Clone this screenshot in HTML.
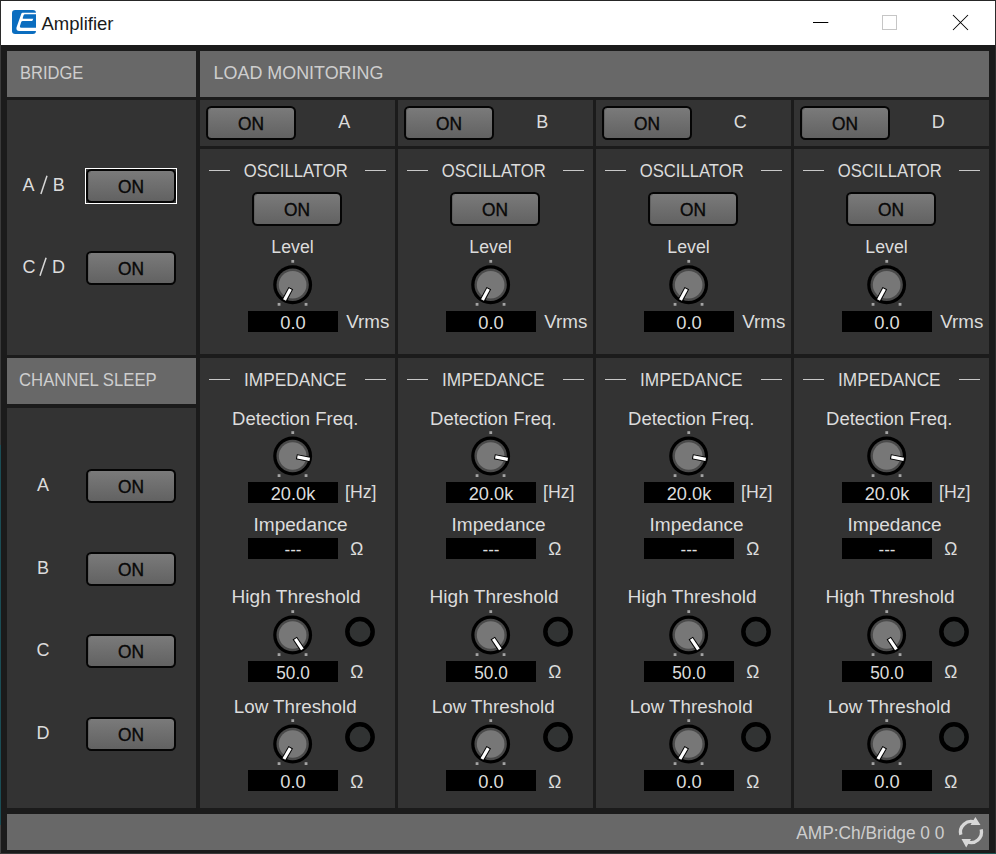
<!DOCTYPE html>
<html><head><meta charset="utf-8"><title>Amplifier</title>
<style>html,body{margin:0;padding:0;background:#1b1b1b;overflow:hidden;width:996px;height:854px}</style>
</head><body>
<svg width="996" height="854" viewBox="0 0 996 854" font-family='"Liberation Sans", sans-serif' style="display:block">
<defs><linearGradient id="btn" x1="0" y1="0" x2="0" y2="1"><stop offset="0" stop-color="#7b7b7b"/><stop offset="1" stop-color="#616161"/></linearGradient></defs>
<rect x="0" y="0" width="996" height="854" fill="#1b1b1b"/>
<rect x="0" y="0" width="996" height="45" fill="#ffffff"/>
<rect x="0" y="0" width="996" height="1" fill="#262626"/>
<rect x="0" y="1" width="1" height="44" fill="#2b2b2b"/>
<rect x="0" y="45" width="1" height="400" fill="#3a3a3a"/>
<rect x="0" y="445" width="1" height="380" fill="#1b4d55"/>
<rect x="0" y="825" width="1" height="29" fill="#444444"/>
<rect x="995" y="1" width="1" height="853" fill="#2c2c2c"/>
<rect x="0" y="853" width="996" height="1" fill="#3a3a3a"/>
<rect x="930" y="853" width="66" height="1" fill="#1d5550"/>
<g transform="translate(12,10)"><rect x="0" y="0" width="24" height="24" rx="3.2" fill="#0b6dbf"/><path d="M24 2.7 L10.6 2.7 Q9.7 2.7 9.4 3.6 L4.5 17.6 Q3.9 21 7.2 21 L24 21 L24 17.7 L9.6 17.7 Q7.6 17.7 7.9 16.2 L9.1 12.3 Q9.5 11.1 10.8 11.1 L19.6 11.1 Q20.2 11.1 20.5 10.6 L21.3 8.8 L11.3 8.8 Q10.5 8.8 10.7 8.0 L11.6 5.2 Q11.9 4.2 12.9 4.2 L24 4.2 Z" fill="#fff"/></g>
<text x="41.5" y="29.6" font-size="18.5" fill="#1a1a1a" text-anchor="start" textLength="72" lengthAdjust="spacingAndGlyphs">Amplifier</text>
<line x1="813" y1="22.5" x2="828.3" y2="22.5" stroke="#000" stroke-width="1"/>
<rect x="882.5" y="15.5" width="14" height="14" fill="none" stroke="#c6c6c6" stroke-width="1"/>
<path d="M953 15 L968 30 M968 15 L953 30" stroke="#000" stroke-width="1.05"/>
<rect x="7" y="51" width="189" height="46" fill="#686868"/>
<text x="20" y="78.9" font-size="18" fill="#cecece" text-anchor="start" textLength="63.3" lengthAdjust="spacingAndGlyphs">BRIDGE</text>
<rect x="200" y="51" width="789" height="46" fill="#686868"/>
<text x="213.6" y="78.9" font-size="18" fill="#cecece" text-anchor="start" textLength="169.8" lengthAdjust="spacingAndGlyphs">LOAD MONITORING</text>
<rect x="7" y="100" width="189" height="255" fill="#333333"/>
<text x="22.6" y="190.8" font-size="18" fill="#dcdcdc" text-anchor="start">A</text>
<text x="52.8" y="190.8" font-size="18" fill="#dcdcdc" text-anchor="start">B</text>
<line x1="40.9" y1="194.1" x2="47.0" y2="175.8" stroke="#d8d8d8" stroke-width="1.5"/>
<text x="22.6" y="273.1" font-size="18" fill="#dcdcdc" text-anchor="start">C</text>
<text x="51.9" y="273.1" font-size="18" fill="#dcdcdc" text-anchor="start">D</text>
<line x1="40.0" y1="275.8" x2="46.1" y2="257.8" stroke="#d8d8d8" stroke-width="1.5"/>
<rect x="85.5" y="168.5" width="91" height="35" fill="none" stroke="#ffffff" stroke-width="1"/>
<rect x="87" y="170" width="88" height="32" rx="4.5" fill="url(#btn)" stroke="#050505" stroke-width="2"/>
<path d="M88.5 199 L88.5 174 Q88.5 171.5 91 171.5" fill="none" stroke="#5c5c5c" stroke-width="1" opacity="0.8"/>
<text x="131.0" y="192.5" font-size="17.5" fill="#080808" text-anchor="middle" textLength="26" lengthAdjust="spacingAndGlyphs" stroke="#080808" stroke-width="0.35">ON</text>
<rect x="87" y="252" width="88" height="32" rx="4.5" fill="url(#btn)" stroke="#050505" stroke-width="2"/>
<path d="M88.5 281 L88.5 256 Q88.5 253.5 91 253.5" fill="none" stroke="#5c5c5c" stroke-width="1" opacity="0.8"/>
<text x="131.0" y="274.5" font-size="17.5" fill="#080808" text-anchor="middle" textLength="26" lengthAdjust="spacingAndGlyphs" stroke="#080808" stroke-width="0.35">ON</text>
<rect x="7" y="358" width="189" height="46" fill="#686868"/>
<text x="19" y="386" font-size="18" fill="#cecece" text-anchor="start" textLength="137.7" lengthAdjust="spacingAndGlyphs">CHANNEL SLEEP</text>
<rect x="7" y="408" width="189" height="400" fill="#333333"/>
<text x="43" y="491" font-size="18" fill="#dcdcdc" text-anchor="middle">A</text>
<rect x="87" y="470" width="88" height="32" rx="4.5" fill="url(#btn)" stroke="#050505" stroke-width="2"/>
<path d="M88.5 499 L88.5 474 Q88.5 471.5 91 471.5" fill="none" stroke="#5c5c5c" stroke-width="1" opacity="0.8"/>
<text x="131.0" y="492.5" font-size="17.5" fill="#080808" text-anchor="middle" textLength="26" lengthAdjust="spacingAndGlyphs" stroke="#080808" stroke-width="0.35">ON</text>
<text x="43" y="574" font-size="18" fill="#dcdcdc" text-anchor="middle">B</text>
<rect x="87" y="553" width="88" height="32" rx="4.5" fill="url(#btn)" stroke="#050505" stroke-width="2"/>
<path d="M88.5 582 L88.5 557 Q88.5 554.5 91 554.5" fill="none" stroke="#5c5c5c" stroke-width="1" opacity="0.8"/>
<text x="131.0" y="575.5" font-size="17.5" fill="#080808" text-anchor="middle" textLength="26" lengthAdjust="spacingAndGlyphs" stroke="#080808" stroke-width="0.35">ON</text>
<text x="43" y="656" font-size="18" fill="#dcdcdc" text-anchor="middle">C</text>
<rect x="87" y="635" width="88" height="32" rx="4.5" fill="url(#btn)" stroke="#050505" stroke-width="2"/>
<path d="M88.5 664 L88.5 639 Q88.5 636.5 91 636.5" fill="none" stroke="#5c5c5c" stroke-width="1" opacity="0.8"/>
<text x="131.0" y="657.5" font-size="17.5" fill="#080808" text-anchor="middle" textLength="26" lengthAdjust="spacingAndGlyphs" stroke="#080808" stroke-width="0.35">ON</text>
<text x="43" y="739" font-size="18" fill="#dcdcdc" text-anchor="middle">D</text>
<rect x="87" y="718" width="88" height="32" rx="4.5" fill="url(#btn)" stroke="#050505" stroke-width="2"/>
<path d="M88.5 747 L88.5 722 Q88.5 719.5 91 719.5" fill="none" stroke="#5c5c5c" stroke-width="1" opacity="0.8"/>
<text x="131.0" y="740.5" font-size="17.5" fill="#080808" text-anchor="middle" textLength="26" lengthAdjust="spacingAndGlyphs" stroke="#080808" stroke-width="0.35">ON</text>
<rect x="200" y="100" width="195" height="46" fill="#333333"/>
<rect x="200" y="149" width="195" height="205" fill="#333333"/>
<rect x="200" y="358" width="195" height="450" fill="#333333"/>
<rect x="207" y="107" width="88" height="32" rx="4.5" fill="url(#btn)" stroke="#050505" stroke-width="2"/>
<path d="M208.5 136 L208.5 111 Q208.5 108.5 211 108.5" fill="none" stroke="#5c5c5c" stroke-width="1" opacity="0.8"/>
<text x="251.0" y="129.5" font-size="17.5" fill="#080808" text-anchor="middle" textLength="26" lengthAdjust="spacingAndGlyphs" stroke="#080808" stroke-width="0.35">ON</text>
<text x="344.2" y="127.8" font-size="18" fill="#dcdcdc" text-anchor="middle">A</text>
<line x1="209" y1="170.5" x2="230" y2="170.5" stroke="#c8c8c8"/>
<line x1="365" y1="170.5" x2="386" y2="170.5" stroke="#c8c8c8"/>
<text x="295.7" y="176.8" font-size="18" fill="#dcdcdc" text-anchor="middle" textLength="104" lengthAdjust="spacingAndGlyphs">OSCILLATOR</text>
<rect x="253" y="193" width="88" height="32" rx="4.5" fill="url(#btn)" stroke="#050505" stroke-width="2"/>
<path d="M254.5 222 L254.5 197 Q254.5 194.5 257 194.5" fill="none" stroke="#5c5c5c" stroke-width="1" opacity="0.8"/>
<text x="297.0" y="215.5" font-size="17.5" fill="#080808" text-anchor="middle" textLength="26" lengthAdjust="spacingAndGlyphs" stroke="#080808" stroke-width="0.35">ON</text>
<text x="292.5" y="253" font-size="18" fill="#dcdcdc" text-anchor="middle" textLength="42.4" lengthAdjust="spacingAndGlyphs">Level</text>
<rect x="291.34999999999997" y="259.95" width="2.8" height="2.8" fill="#a4a4a4"/>
<rect x="277.65" y="302.95" width="2.8" height="2.8" fill="#a4a4a4"/>
<rect x="304.65" y="302.95" width="2.8" height="2.8" fill="#a4a4a4"/>
<circle cx="292.65" cy="284.75" r="19.45" fill="#000"/>
<circle cx="292.65" cy="284.75" r="16.2" fill="#4a4a4a"/>
<circle cx="292.65" cy="284.75" r="13.8" fill="#777777"/>
<g transform="translate(292.65,284.75) rotate(208)"><rect x="-2.6" y="-18.4" width="5.2" height="14.6" fill="#000"/><rect x="-1.6" y="-17.4" width="3.2" height="12.6" fill="#fff"/></g>
<rect x="248" y="311" width="90" height="21" fill="#000"/>
<text x="293.0" y="328.6" font-size="17.5" fill="#dcdcdc" text-anchor="middle" textLength="25.5" lengthAdjust="spacingAndGlyphs">0.0</text>
<text x="346.3" y="327.8" font-size="18" fill="#dcdcdc" text-anchor="start" textLength="43.1" lengthAdjust="spacingAndGlyphs">Vrms</text>
<line x1="209" y1="379.5" x2="230" y2="379.5" stroke="#c8c8c8"/>
<line x1="365" y1="379.5" x2="386" y2="379.5" stroke="#c8c8c8"/>
<text x="295.3" y="385.6" font-size="18" fill="#dcdcdc" text-anchor="middle" textLength="102.6" lengthAdjust="spacingAndGlyphs">IMPEDANCE</text>
<text x="295.2" y="424.7" font-size="18" fill="#dcdcdc" text-anchor="middle" textLength="126.3" lengthAdjust="spacingAndGlyphs">Detection Freq.</text>
<rect x="291.34999999999997" y="431.2" width="2.8" height="2.8" fill="#a4a4a4"/>
<rect x="277.65" y="474.2" width="2.8" height="2.8" fill="#a4a4a4"/>
<rect x="304.65" y="474.2" width="2.8" height="2.8" fill="#a4a4a4"/>
<circle cx="292.65" cy="456" r="19.45" fill="#000"/>
<circle cx="292.65" cy="456" r="16.2" fill="#4a4a4a"/>
<circle cx="292.65" cy="456" r="13.8" fill="#777777"/>
<g transform="translate(292.65,456) rotate(101)"><rect x="-2.6" y="-18.4" width="5.2" height="14.6" fill="#000"/><rect x="-1.6" y="-17.4" width="3.2" height="12.6" fill="#fff"/></g>
<rect x="248" y="482" width="90" height="21" fill="#000"/>
<text x="293.0" y="499.6" font-size="17.5" fill="#dcdcdc" text-anchor="middle" textLength="44.5" lengthAdjust="spacingAndGlyphs">20.0k</text>
<text x="345" y="497.7" font-size="18" fill="#dcdcdc" text-anchor="start" textLength="31.5" lengthAdjust="spacingAndGlyphs">[Hz]</text>
<text x="300.6" y="530.9" font-size="18" fill="#dcdcdc" text-anchor="middle" textLength="94.2" lengthAdjust="spacingAndGlyphs">Impedance</text>
<rect x="248" y="538" width="90" height="21" fill="#000"/>
<text x="293.0" y="555.6" font-size="17.5" fill="#dcdcdc" text-anchor="middle" textLength="17" lengthAdjust="spacingAndGlyphs">---</text>
<text x="350.2" y="554.9" font-size="18" fill="#dcdcdc" text-anchor="start" textLength="13.1" lengthAdjust="spacingAndGlyphs">Ω</text>
<text x="296.1" y="602.6" font-size="18" fill="#dcdcdc" text-anchor="middle" textLength="129.1" lengthAdjust="spacingAndGlyphs">High Threshold</text>
<rect x="291.34999999999997" y="610.2" width="2.8" height="2.8" fill="#a4a4a4"/>
<rect x="277.65" y="653.2" width="2.8" height="2.8" fill="#a4a4a4"/>
<rect x="304.65" y="653.2" width="2.8" height="2.8" fill="#a4a4a4"/>
<circle cx="292.65" cy="635" r="19.45" fill="#000"/>
<circle cx="292.65" cy="635" r="16.2" fill="#4a4a4a"/>
<circle cx="292.65" cy="635" r="13.8" fill="#777777"/>
<g transform="translate(292.65,635) rotate(146)"><rect x="-2.6" y="-18.4" width="5.2" height="14.6" fill="#000"/><rect x="-1.6" y="-17.4" width="3.2" height="12.6" fill="#fff"/></g>
<circle cx="360" cy="631.75" r="12.65" fill="#313333" stroke="#000" stroke-width="4.5"/>
<rect x="248" y="661" width="90" height="21" fill="#000"/>
<text x="293.0" y="678.6" font-size="17.5" fill="#dcdcdc" text-anchor="middle" textLength="33.5" lengthAdjust="spacingAndGlyphs">50.0</text>
<text x="350.2" y="678.2" font-size="18" fill="#dcdcdc" text-anchor="start" textLength="13.1" lengthAdjust="spacingAndGlyphs">Ω</text>
<text x="295.2" y="713" font-size="18" fill="#dcdcdc" text-anchor="middle" textLength="122.9" lengthAdjust="spacingAndGlyphs">Low Threshold</text>
<rect x="291.34999999999997" y="719.2" width="2.8" height="2.8" fill="#a4a4a4"/>
<rect x="277.65" y="762.2" width="2.8" height="2.8" fill="#a4a4a4"/>
<rect x="304.65" y="762.2" width="2.8" height="2.8" fill="#a4a4a4"/>
<circle cx="292.65" cy="744" r="19.45" fill="#000"/>
<circle cx="292.65" cy="744" r="16.2" fill="#4a4a4a"/>
<circle cx="292.65" cy="744" r="13.8" fill="#777777"/>
<g transform="translate(292.65,744) rotate(210)"><rect x="-2.6" y="-18.4" width="5.2" height="14.6" fill="#000"/><rect x="-1.6" y="-17.4" width="3.2" height="12.6" fill="#fff"/></g>
<circle cx="360" cy="737" r="12.65" fill="#313333" stroke="#000" stroke-width="4.5"/>
<rect x="248" y="770" width="90" height="21" fill="#000"/>
<text x="293.0" y="787.6" font-size="17.5" fill="#dcdcdc" text-anchor="middle" textLength="25.5" lengthAdjust="spacingAndGlyphs">0.0</text>
<text x="350.2" y="788" font-size="18" fill="#dcdcdc" text-anchor="start" textLength="13.1" lengthAdjust="spacingAndGlyphs">Ω</text>
<rect x="398" y="100" width="195" height="46" fill="#333333"/>
<rect x="398" y="149" width="195" height="205" fill="#333333"/>
<rect x="398" y="358" width="195" height="450" fill="#333333"/>
<rect x="405" y="107" width="88" height="32" rx="4.5" fill="url(#btn)" stroke="#050505" stroke-width="2"/>
<path d="M406.5 136 L406.5 111 Q406.5 108.5 409 108.5" fill="none" stroke="#5c5c5c" stroke-width="1" opacity="0.8"/>
<text x="449.0" y="129.5" font-size="17.5" fill="#080808" text-anchor="middle" textLength="26" lengthAdjust="spacingAndGlyphs" stroke="#080808" stroke-width="0.35">ON</text>
<text x="542.2" y="127.8" font-size="18" fill="#dcdcdc" text-anchor="middle">B</text>
<line x1="407" y1="170.5" x2="428" y2="170.5" stroke="#c8c8c8"/>
<line x1="563" y1="170.5" x2="584" y2="170.5" stroke="#c8c8c8"/>
<text x="493.7" y="176.8" font-size="18" fill="#dcdcdc" text-anchor="middle" textLength="104" lengthAdjust="spacingAndGlyphs">OSCILLATOR</text>
<rect x="451" y="193" width="88" height="32" rx="4.5" fill="url(#btn)" stroke="#050505" stroke-width="2"/>
<path d="M452.5 222 L452.5 197 Q452.5 194.5 455 194.5" fill="none" stroke="#5c5c5c" stroke-width="1" opacity="0.8"/>
<text x="495.0" y="215.5" font-size="17.5" fill="#080808" text-anchor="middle" textLength="26" lengthAdjust="spacingAndGlyphs" stroke="#080808" stroke-width="0.35">ON</text>
<text x="490.5" y="253" font-size="18" fill="#dcdcdc" text-anchor="middle" textLength="42.4" lengthAdjust="spacingAndGlyphs">Level</text>
<rect x="489.34999999999997" y="259.95" width="2.8" height="2.8" fill="#a4a4a4"/>
<rect x="475.65" y="302.95" width="2.8" height="2.8" fill="#a4a4a4"/>
<rect x="502.65" y="302.95" width="2.8" height="2.8" fill="#a4a4a4"/>
<circle cx="490.65" cy="284.75" r="19.45" fill="#000"/>
<circle cx="490.65" cy="284.75" r="16.2" fill="#4a4a4a"/>
<circle cx="490.65" cy="284.75" r="13.8" fill="#777777"/>
<g transform="translate(490.65,284.75) rotate(208)"><rect x="-2.6" y="-18.4" width="5.2" height="14.6" fill="#000"/><rect x="-1.6" y="-17.4" width="3.2" height="12.6" fill="#fff"/></g>
<rect x="446" y="311" width="90" height="21" fill="#000"/>
<text x="491.0" y="328.6" font-size="17.5" fill="#dcdcdc" text-anchor="middle" textLength="25.5" lengthAdjust="spacingAndGlyphs">0.0</text>
<text x="544.3" y="327.8" font-size="18" fill="#dcdcdc" text-anchor="start" textLength="43.1" lengthAdjust="spacingAndGlyphs">Vrms</text>
<line x1="407" y1="379.5" x2="428" y2="379.5" stroke="#c8c8c8"/>
<line x1="563" y1="379.5" x2="584" y2="379.5" stroke="#c8c8c8"/>
<text x="493.3" y="385.6" font-size="18" fill="#dcdcdc" text-anchor="middle" textLength="102.6" lengthAdjust="spacingAndGlyphs">IMPEDANCE</text>
<text x="493.2" y="424.7" font-size="18" fill="#dcdcdc" text-anchor="middle" textLength="126.3" lengthAdjust="spacingAndGlyphs">Detection Freq.</text>
<rect x="489.34999999999997" y="431.2" width="2.8" height="2.8" fill="#a4a4a4"/>
<rect x="475.65" y="474.2" width="2.8" height="2.8" fill="#a4a4a4"/>
<rect x="502.65" y="474.2" width="2.8" height="2.8" fill="#a4a4a4"/>
<circle cx="490.65" cy="456" r="19.45" fill="#000"/>
<circle cx="490.65" cy="456" r="16.2" fill="#4a4a4a"/>
<circle cx="490.65" cy="456" r="13.8" fill="#777777"/>
<g transform="translate(490.65,456) rotate(101)"><rect x="-2.6" y="-18.4" width="5.2" height="14.6" fill="#000"/><rect x="-1.6" y="-17.4" width="3.2" height="12.6" fill="#fff"/></g>
<rect x="446" y="482" width="90" height="21" fill="#000"/>
<text x="491.0" y="499.6" font-size="17.5" fill="#dcdcdc" text-anchor="middle" textLength="44.5" lengthAdjust="spacingAndGlyphs">20.0k</text>
<text x="543" y="497.7" font-size="18" fill="#dcdcdc" text-anchor="start" textLength="31.5" lengthAdjust="spacingAndGlyphs">[Hz]</text>
<text x="498.6" y="530.9" font-size="18" fill="#dcdcdc" text-anchor="middle" textLength="94.2" lengthAdjust="spacingAndGlyphs">Impedance</text>
<rect x="446" y="538" width="90" height="21" fill="#000"/>
<text x="491.0" y="555.6" font-size="17.5" fill="#dcdcdc" text-anchor="middle" textLength="17" lengthAdjust="spacingAndGlyphs">---</text>
<text x="548.2" y="554.9" font-size="18" fill="#dcdcdc" text-anchor="start" textLength="13.1" lengthAdjust="spacingAndGlyphs">Ω</text>
<text x="494.1" y="602.6" font-size="18" fill="#dcdcdc" text-anchor="middle" textLength="129.1" lengthAdjust="spacingAndGlyphs">High Threshold</text>
<rect x="489.34999999999997" y="610.2" width="2.8" height="2.8" fill="#a4a4a4"/>
<rect x="475.65" y="653.2" width="2.8" height="2.8" fill="#a4a4a4"/>
<rect x="502.65" y="653.2" width="2.8" height="2.8" fill="#a4a4a4"/>
<circle cx="490.65" cy="635" r="19.45" fill="#000"/>
<circle cx="490.65" cy="635" r="16.2" fill="#4a4a4a"/>
<circle cx="490.65" cy="635" r="13.8" fill="#777777"/>
<g transform="translate(490.65,635) rotate(146)"><rect x="-2.6" y="-18.4" width="5.2" height="14.6" fill="#000"/><rect x="-1.6" y="-17.4" width="3.2" height="12.6" fill="#fff"/></g>
<circle cx="558" cy="631.75" r="12.65" fill="#313333" stroke="#000" stroke-width="4.5"/>
<rect x="446" y="661" width="90" height="21" fill="#000"/>
<text x="491.0" y="678.6" font-size="17.5" fill="#dcdcdc" text-anchor="middle" textLength="33.5" lengthAdjust="spacingAndGlyphs">50.0</text>
<text x="548.2" y="678.2" font-size="18" fill="#dcdcdc" text-anchor="start" textLength="13.1" lengthAdjust="spacingAndGlyphs">Ω</text>
<text x="493.2" y="713" font-size="18" fill="#dcdcdc" text-anchor="middle" textLength="122.9" lengthAdjust="spacingAndGlyphs">Low Threshold</text>
<rect x="489.34999999999997" y="719.2" width="2.8" height="2.8" fill="#a4a4a4"/>
<rect x="475.65" y="762.2" width="2.8" height="2.8" fill="#a4a4a4"/>
<rect x="502.65" y="762.2" width="2.8" height="2.8" fill="#a4a4a4"/>
<circle cx="490.65" cy="744" r="19.45" fill="#000"/>
<circle cx="490.65" cy="744" r="16.2" fill="#4a4a4a"/>
<circle cx="490.65" cy="744" r="13.8" fill="#777777"/>
<g transform="translate(490.65,744) rotate(210)"><rect x="-2.6" y="-18.4" width="5.2" height="14.6" fill="#000"/><rect x="-1.6" y="-17.4" width="3.2" height="12.6" fill="#fff"/></g>
<circle cx="558" cy="737" r="12.65" fill="#313333" stroke="#000" stroke-width="4.5"/>
<rect x="446" y="770" width="90" height="21" fill="#000"/>
<text x="491.0" y="787.6" font-size="17.5" fill="#dcdcdc" text-anchor="middle" textLength="25.5" lengthAdjust="spacingAndGlyphs">0.0</text>
<text x="548.2" y="788" font-size="18" fill="#dcdcdc" text-anchor="start" textLength="13.1" lengthAdjust="spacingAndGlyphs">Ω</text>
<rect x="596" y="100" width="195" height="46" fill="#333333"/>
<rect x="596" y="149" width="195" height="205" fill="#333333"/>
<rect x="596" y="358" width="195" height="450" fill="#333333"/>
<rect x="603" y="107" width="88" height="32" rx="4.5" fill="url(#btn)" stroke="#050505" stroke-width="2"/>
<path d="M604.5 136 L604.5 111 Q604.5 108.5 607 108.5" fill="none" stroke="#5c5c5c" stroke-width="1" opacity="0.8"/>
<text x="647.0" y="129.5" font-size="17.5" fill="#080808" text-anchor="middle" textLength="26" lengthAdjust="spacingAndGlyphs" stroke="#080808" stroke-width="0.35">ON</text>
<text x="740.2" y="127.8" font-size="18" fill="#dcdcdc" text-anchor="middle">C</text>
<line x1="605" y1="170.5" x2="626" y2="170.5" stroke="#c8c8c8"/>
<line x1="761" y1="170.5" x2="782" y2="170.5" stroke="#c8c8c8"/>
<text x="691.7" y="176.8" font-size="18" fill="#dcdcdc" text-anchor="middle" textLength="104" lengthAdjust="spacingAndGlyphs">OSCILLATOR</text>
<rect x="649" y="193" width="88" height="32" rx="4.5" fill="url(#btn)" stroke="#050505" stroke-width="2"/>
<path d="M650.5 222 L650.5 197 Q650.5 194.5 653 194.5" fill="none" stroke="#5c5c5c" stroke-width="1" opacity="0.8"/>
<text x="693.0" y="215.5" font-size="17.5" fill="#080808" text-anchor="middle" textLength="26" lengthAdjust="spacingAndGlyphs" stroke="#080808" stroke-width="0.35">ON</text>
<text x="688.5" y="253" font-size="18" fill="#dcdcdc" text-anchor="middle" textLength="42.4" lengthAdjust="spacingAndGlyphs">Level</text>
<rect x="687.35" y="259.95" width="2.8" height="2.8" fill="#a4a4a4"/>
<rect x="673.65" y="302.95" width="2.8" height="2.8" fill="#a4a4a4"/>
<rect x="700.65" y="302.95" width="2.8" height="2.8" fill="#a4a4a4"/>
<circle cx="688.65" cy="284.75" r="19.45" fill="#000"/>
<circle cx="688.65" cy="284.75" r="16.2" fill="#4a4a4a"/>
<circle cx="688.65" cy="284.75" r="13.8" fill="#777777"/>
<g transform="translate(688.65,284.75) rotate(208)"><rect x="-2.6" y="-18.4" width="5.2" height="14.6" fill="#000"/><rect x="-1.6" y="-17.4" width="3.2" height="12.6" fill="#fff"/></g>
<rect x="644" y="311" width="90" height="21" fill="#000"/>
<text x="689.0" y="328.6" font-size="17.5" fill="#dcdcdc" text-anchor="middle" textLength="25.5" lengthAdjust="spacingAndGlyphs">0.0</text>
<text x="742.3" y="327.8" font-size="18" fill="#dcdcdc" text-anchor="start" textLength="43.1" lengthAdjust="spacingAndGlyphs">Vrms</text>
<line x1="605" y1="379.5" x2="626" y2="379.5" stroke="#c8c8c8"/>
<line x1="761" y1="379.5" x2="782" y2="379.5" stroke="#c8c8c8"/>
<text x="691.3" y="385.6" font-size="18" fill="#dcdcdc" text-anchor="middle" textLength="102.6" lengthAdjust="spacingAndGlyphs">IMPEDANCE</text>
<text x="691.2" y="424.7" font-size="18" fill="#dcdcdc" text-anchor="middle" textLength="126.3" lengthAdjust="spacingAndGlyphs">Detection Freq.</text>
<rect x="687.35" y="431.2" width="2.8" height="2.8" fill="#a4a4a4"/>
<rect x="673.65" y="474.2" width="2.8" height="2.8" fill="#a4a4a4"/>
<rect x="700.65" y="474.2" width="2.8" height="2.8" fill="#a4a4a4"/>
<circle cx="688.65" cy="456" r="19.45" fill="#000"/>
<circle cx="688.65" cy="456" r="16.2" fill="#4a4a4a"/>
<circle cx="688.65" cy="456" r="13.8" fill="#777777"/>
<g transform="translate(688.65,456) rotate(101)"><rect x="-2.6" y="-18.4" width="5.2" height="14.6" fill="#000"/><rect x="-1.6" y="-17.4" width="3.2" height="12.6" fill="#fff"/></g>
<rect x="644" y="482" width="90" height="21" fill="#000"/>
<text x="689.0" y="499.6" font-size="17.5" fill="#dcdcdc" text-anchor="middle" textLength="44.5" lengthAdjust="spacingAndGlyphs">20.0k</text>
<text x="741" y="497.7" font-size="18" fill="#dcdcdc" text-anchor="start" textLength="31.5" lengthAdjust="spacingAndGlyphs">[Hz]</text>
<text x="696.6" y="530.9" font-size="18" fill="#dcdcdc" text-anchor="middle" textLength="94.2" lengthAdjust="spacingAndGlyphs">Impedance</text>
<rect x="644" y="538" width="90" height="21" fill="#000"/>
<text x="689.0" y="555.6" font-size="17.5" fill="#dcdcdc" text-anchor="middle" textLength="17" lengthAdjust="spacingAndGlyphs">---</text>
<text x="746.2" y="554.9" font-size="18" fill="#dcdcdc" text-anchor="start" textLength="13.1" lengthAdjust="spacingAndGlyphs">Ω</text>
<text x="692.1" y="602.6" font-size="18" fill="#dcdcdc" text-anchor="middle" textLength="129.1" lengthAdjust="spacingAndGlyphs">High Threshold</text>
<rect x="687.35" y="610.2" width="2.8" height="2.8" fill="#a4a4a4"/>
<rect x="673.65" y="653.2" width="2.8" height="2.8" fill="#a4a4a4"/>
<rect x="700.65" y="653.2" width="2.8" height="2.8" fill="#a4a4a4"/>
<circle cx="688.65" cy="635" r="19.45" fill="#000"/>
<circle cx="688.65" cy="635" r="16.2" fill="#4a4a4a"/>
<circle cx="688.65" cy="635" r="13.8" fill="#777777"/>
<g transform="translate(688.65,635) rotate(146)"><rect x="-2.6" y="-18.4" width="5.2" height="14.6" fill="#000"/><rect x="-1.6" y="-17.4" width="3.2" height="12.6" fill="#fff"/></g>
<circle cx="756" cy="631.75" r="12.65" fill="#313333" stroke="#000" stroke-width="4.5"/>
<rect x="644" y="661" width="90" height="21" fill="#000"/>
<text x="689.0" y="678.6" font-size="17.5" fill="#dcdcdc" text-anchor="middle" textLength="33.5" lengthAdjust="spacingAndGlyphs">50.0</text>
<text x="746.2" y="678.2" font-size="18" fill="#dcdcdc" text-anchor="start" textLength="13.1" lengthAdjust="spacingAndGlyphs">Ω</text>
<text x="691.2" y="713" font-size="18" fill="#dcdcdc" text-anchor="middle" textLength="122.9" lengthAdjust="spacingAndGlyphs">Low Threshold</text>
<rect x="687.35" y="719.2" width="2.8" height="2.8" fill="#a4a4a4"/>
<rect x="673.65" y="762.2" width="2.8" height="2.8" fill="#a4a4a4"/>
<rect x="700.65" y="762.2" width="2.8" height="2.8" fill="#a4a4a4"/>
<circle cx="688.65" cy="744" r="19.45" fill="#000"/>
<circle cx="688.65" cy="744" r="16.2" fill="#4a4a4a"/>
<circle cx="688.65" cy="744" r="13.8" fill="#777777"/>
<g transform="translate(688.65,744) rotate(210)"><rect x="-2.6" y="-18.4" width="5.2" height="14.6" fill="#000"/><rect x="-1.6" y="-17.4" width="3.2" height="12.6" fill="#fff"/></g>
<circle cx="756" cy="737" r="12.65" fill="#313333" stroke="#000" stroke-width="4.5"/>
<rect x="644" y="770" width="90" height="21" fill="#000"/>
<text x="689.0" y="787.6" font-size="17.5" fill="#dcdcdc" text-anchor="middle" textLength="25.5" lengthAdjust="spacingAndGlyphs">0.0</text>
<text x="746.2" y="788" font-size="18" fill="#dcdcdc" text-anchor="start" textLength="13.1" lengthAdjust="spacingAndGlyphs">Ω</text>
<rect x="794" y="100" width="195" height="46" fill="#333333"/>
<rect x="794" y="149" width="195" height="205" fill="#333333"/>
<rect x="794" y="358" width="195" height="450" fill="#333333"/>
<rect x="801" y="107" width="88" height="32" rx="4.5" fill="url(#btn)" stroke="#050505" stroke-width="2"/>
<path d="M802.5 136 L802.5 111 Q802.5 108.5 805 108.5" fill="none" stroke="#5c5c5c" stroke-width="1" opacity="0.8"/>
<text x="845.0" y="129.5" font-size="17.5" fill="#080808" text-anchor="middle" textLength="26" lengthAdjust="spacingAndGlyphs" stroke="#080808" stroke-width="0.35">ON</text>
<text x="938.2" y="127.8" font-size="18" fill="#dcdcdc" text-anchor="middle">D</text>
<line x1="803" y1="170.5" x2="824" y2="170.5" stroke="#c8c8c8"/>
<line x1="959" y1="170.5" x2="980" y2="170.5" stroke="#c8c8c8"/>
<text x="889.7" y="176.8" font-size="18" fill="#dcdcdc" text-anchor="middle" textLength="104" lengthAdjust="spacingAndGlyphs">OSCILLATOR</text>
<rect x="847" y="193" width="88" height="32" rx="4.5" fill="url(#btn)" stroke="#050505" stroke-width="2"/>
<path d="M848.5 222 L848.5 197 Q848.5 194.5 851 194.5" fill="none" stroke="#5c5c5c" stroke-width="1" opacity="0.8"/>
<text x="891.0" y="215.5" font-size="17.5" fill="#080808" text-anchor="middle" textLength="26" lengthAdjust="spacingAndGlyphs" stroke="#080808" stroke-width="0.35">ON</text>
<text x="886.5" y="253" font-size="18" fill="#dcdcdc" text-anchor="middle" textLength="42.4" lengthAdjust="spacingAndGlyphs">Level</text>
<rect x="885.35" y="259.95" width="2.8" height="2.8" fill="#a4a4a4"/>
<rect x="871.65" y="302.95" width="2.8" height="2.8" fill="#a4a4a4"/>
<rect x="898.65" y="302.95" width="2.8" height="2.8" fill="#a4a4a4"/>
<circle cx="886.65" cy="284.75" r="19.45" fill="#000"/>
<circle cx="886.65" cy="284.75" r="16.2" fill="#4a4a4a"/>
<circle cx="886.65" cy="284.75" r="13.8" fill="#777777"/>
<g transform="translate(886.65,284.75) rotate(208)"><rect x="-2.6" y="-18.4" width="5.2" height="14.6" fill="#000"/><rect x="-1.6" y="-17.4" width="3.2" height="12.6" fill="#fff"/></g>
<rect x="842" y="311" width="90" height="21" fill="#000"/>
<text x="887.0" y="328.6" font-size="17.5" fill="#dcdcdc" text-anchor="middle" textLength="25.5" lengthAdjust="spacingAndGlyphs">0.0</text>
<text x="940.3" y="327.8" font-size="18" fill="#dcdcdc" text-anchor="start" textLength="43.1" lengthAdjust="spacingAndGlyphs">Vrms</text>
<line x1="803" y1="379.5" x2="824" y2="379.5" stroke="#c8c8c8"/>
<line x1="959" y1="379.5" x2="980" y2="379.5" stroke="#c8c8c8"/>
<text x="889.3" y="385.6" font-size="18" fill="#dcdcdc" text-anchor="middle" textLength="102.6" lengthAdjust="spacingAndGlyphs">IMPEDANCE</text>
<text x="889.2" y="424.7" font-size="18" fill="#dcdcdc" text-anchor="middle" textLength="126.3" lengthAdjust="spacingAndGlyphs">Detection Freq.</text>
<rect x="885.35" y="431.2" width="2.8" height="2.8" fill="#a4a4a4"/>
<rect x="871.65" y="474.2" width="2.8" height="2.8" fill="#a4a4a4"/>
<rect x="898.65" y="474.2" width="2.8" height="2.8" fill="#a4a4a4"/>
<circle cx="886.65" cy="456" r="19.45" fill="#000"/>
<circle cx="886.65" cy="456" r="16.2" fill="#4a4a4a"/>
<circle cx="886.65" cy="456" r="13.8" fill="#777777"/>
<g transform="translate(886.65,456) rotate(101)"><rect x="-2.6" y="-18.4" width="5.2" height="14.6" fill="#000"/><rect x="-1.6" y="-17.4" width="3.2" height="12.6" fill="#fff"/></g>
<rect x="842" y="482" width="90" height="21" fill="#000"/>
<text x="887.0" y="499.6" font-size="17.5" fill="#dcdcdc" text-anchor="middle" textLength="44.5" lengthAdjust="spacingAndGlyphs">20.0k</text>
<text x="939" y="497.7" font-size="18" fill="#dcdcdc" text-anchor="start" textLength="31.5" lengthAdjust="spacingAndGlyphs">[Hz]</text>
<text x="894.6" y="530.9" font-size="18" fill="#dcdcdc" text-anchor="middle" textLength="94.2" lengthAdjust="spacingAndGlyphs">Impedance</text>
<rect x="842" y="538" width="90" height="21" fill="#000"/>
<text x="887.0" y="555.6" font-size="17.5" fill="#dcdcdc" text-anchor="middle" textLength="17" lengthAdjust="spacingAndGlyphs">---</text>
<text x="944.2" y="554.9" font-size="18" fill="#dcdcdc" text-anchor="start" textLength="13.1" lengthAdjust="spacingAndGlyphs">Ω</text>
<text x="890.1" y="602.6" font-size="18" fill="#dcdcdc" text-anchor="middle" textLength="129.1" lengthAdjust="spacingAndGlyphs">High Threshold</text>
<rect x="885.35" y="610.2" width="2.8" height="2.8" fill="#a4a4a4"/>
<rect x="871.65" y="653.2" width="2.8" height="2.8" fill="#a4a4a4"/>
<rect x="898.65" y="653.2" width="2.8" height="2.8" fill="#a4a4a4"/>
<circle cx="886.65" cy="635" r="19.45" fill="#000"/>
<circle cx="886.65" cy="635" r="16.2" fill="#4a4a4a"/>
<circle cx="886.65" cy="635" r="13.8" fill="#777777"/>
<g transform="translate(886.65,635) rotate(146)"><rect x="-2.6" y="-18.4" width="5.2" height="14.6" fill="#000"/><rect x="-1.6" y="-17.4" width="3.2" height="12.6" fill="#fff"/></g>
<circle cx="954" cy="631.75" r="12.65" fill="#313333" stroke="#000" stroke-width="4.5"/>
<rect x="842" y="661" width="90" height="21" fill="#000"/>
<text x="887.0" y="678.6" font-size="17.5" fill="#dcdcdc" text-anchor="middle" textLength="33.5" lengthAdjust="spacingAndGlyphs">50.0</text>
<text x="944.2" y="678.2" font-size="18" fill="#dcdcdc" text-anchor="start" textLength="13.1" lengthAdjust="spacingAndGlyphs">Ω</text>
<text x="889.2" y="713" font-size="18" fill="#dcdcdc" text-anchor="middle" textLength="122.9" lengthAdjust="spacingAndGlyphs">Low Threshold</text>
<rect x="885.35" y="719.2" width="2.8" height="2.8" fill="#a4a4a4"/>
<rect x="871.65" y="762.2" width="2.8" height="2.8" fill="#a4a4a4"/>
<rect x="898.65" y="762.2" width="2.8" height="2.8" fill="#a4a4a4"/>
<circle cx="886.65" cy="744" r="19.45" fill="#000"/>
<circle cx="886.65" cy="744" r="16.2" fill="#4a4a4a"/>
<circle cx="886.65" cy="744" r="13.8" fill="#777777"/>
<g transform="translate(886.65,744) rotate(210)"><rect x="-2.6" y="-18.4" width="5.2" height="14.6" fill="#000"/><rect x="-1.6" y="-17.4" width="3.2" height="12.6" fill="#fff"/></g>
<circle cx="954" cy="737" r="12.65" fill="#313333" stroke="#000" stroke-width="4.5"/>
<rect x="842" y="770" width="90" height="21" fill="#000"/>
<text x="887.0" y="787.6" font-size="17.5" fill="#dcdcdc" text-anchor="middle" textLength="25.5" lengthAdjust="spacingAndGlyphs">0.0</text>
<text x="944.2" y="788" font-size="18" fill="#dcdcdc" text-anchor="start" textLength="13.1" lengthAdjust="spacingAndGlyphs">Ω</text>
<rect x="7" y="814" width="982" height="36" fill="#686868"/>
<text x="796.3" y="839" font-size="18" fill="#cecece" text-anchor="start" textLength="148.1" lengthAdjust="spacingAndGlyphs">AMP:Ch/Bridge 0 0</text>
<g fill="none" stroke="#d8d8d8" stroke-width="3.3"><path d="M960.86 834.72 A10.5 10.5 0 0 1 974.93 822.27"/><path d="M981.19 829.46 A10.5 10.5 0 0 1 967.07 841.73"/></g>
<path d="M975.4 817 L980.5 825 L970.5 825 Z M961.5 839 L971 839 L966.2 847.5 Z" fill="#d8d8d8"/>
</svg>
</body></html>
